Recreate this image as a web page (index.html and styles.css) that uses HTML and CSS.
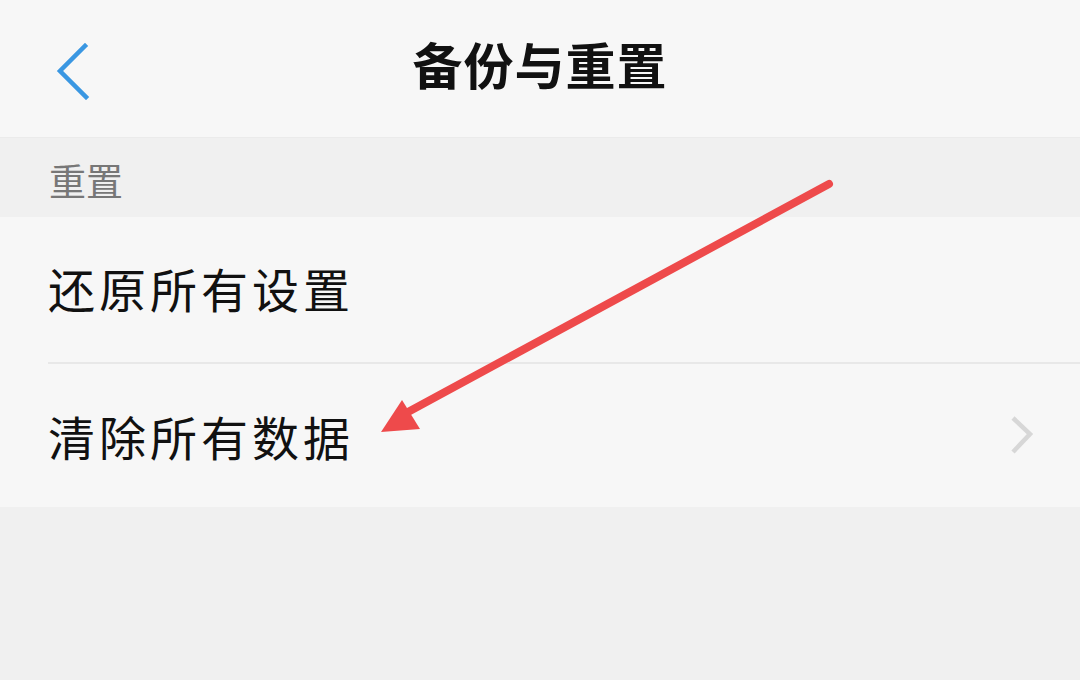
FILE: index.html
```html
<!DOCTYPE html>
<html lang="zh-CN">
<head>
<meta charset="utf-8">
<title>备份与重置</title>
<link rel="stylesheet" href="styles.css">
</head>
<body>
<div class="screen">
  <header class="topbar">
    <span class="back">
      <svg width="40" height="60" viewBox="0 0 40 60"><polyline points="33,6 8,31 34,57" fill="none" stroke="#3a97e2" stroke-width="4.5" stroke-linecap="square"/></svg>
    </span>
    <h1 class="title">备份与重置</h1>
  </header>
  <div class="section">重置</div>
  <ul class="list">
    <li class="item">还原所有设置</li>
    <li class="item item-nav">
      <span>清除所有数据</span>
      <svg class="chev" width="30" height="44" viewBox="0 0 30 44"><polyline points="7,4 24,20 7,38" fill="none" stroke="#d7d7d7" stroke-width="4.5"/></svg>
    </li>
  </ul>
  <svg class="annot" width="1080" height="680" viewBox="0 0 1080 680">
    <line x1="829" y1="184" x2="408" y2="412" stroke="#ee4a4b" stroke-width="8" stroke-linecap="round"/>
    <polygon points="381,432 402,400 420,429" fill="#ee4a4b"/>
  </svg>
</div>
</body>
</html>
```
FILE: styles.css
```css
html, body {
  margin: 0;
  padding: 0;
  background: #f0f0f0;
}
.screen {
  position: relative;
  width: 1080px;
  height: 680px;
  overflow: hidden;
  font-family: "Noto Sans CJK SC", "Noto Sans", sans-serif;
  background: #f0f0f0;
}
.topbar {
  height: 138px;
  background: #f7f7f7;
  display: flex;
  align-items: center;
  justify-content: center;
  position: relative;
  border-bottom: 1px solid #ebebeb;
  box-sizing: border-box;
}
.back {
  position: absolute;
  left: 52px;
  top: 40px;
  width: 40px;
  height: 60px;
}
.back svg { display: block; }
.title {
  margin: 0 0 12px 0;
  font-size: 50px;
  font-weight: 700;
  color: #111;
  letter-spacing: 1px;
  line-height: 1;
}
.section {
  height: 79px;
  box-sizing: border-box;
  padding-left: 49px;
  padding-top: 4px;
  display: flex;
  align-items: center;
  font-size: 37px;
  color: #777;
  background: #f0f0f0;
}
.list {
  list-style: none;
  margin: 0;
  padding: 0 0 0 48px;
  background: #f7f7f7;
}
.item {
  height: 145px;
  box-sizing: border-box;
  display: flex;
  align-items: center;
  font-size: 47px;
  letter-spacing: 4px;
  color: #111;
  padding-bottom: 4px;
}
.item + .item {
  border-top: 2px solid #e8e8e8;
}
.item-nav {
  justify-content: space-between;
  padding-right: 44px;
  padding-bottom: 0;
}
.chev { display: block; margin-top: 0; }
.annot {
  position: absolute;
  left: 0;
  top: 0;
  pointer-events: none;
}
```
